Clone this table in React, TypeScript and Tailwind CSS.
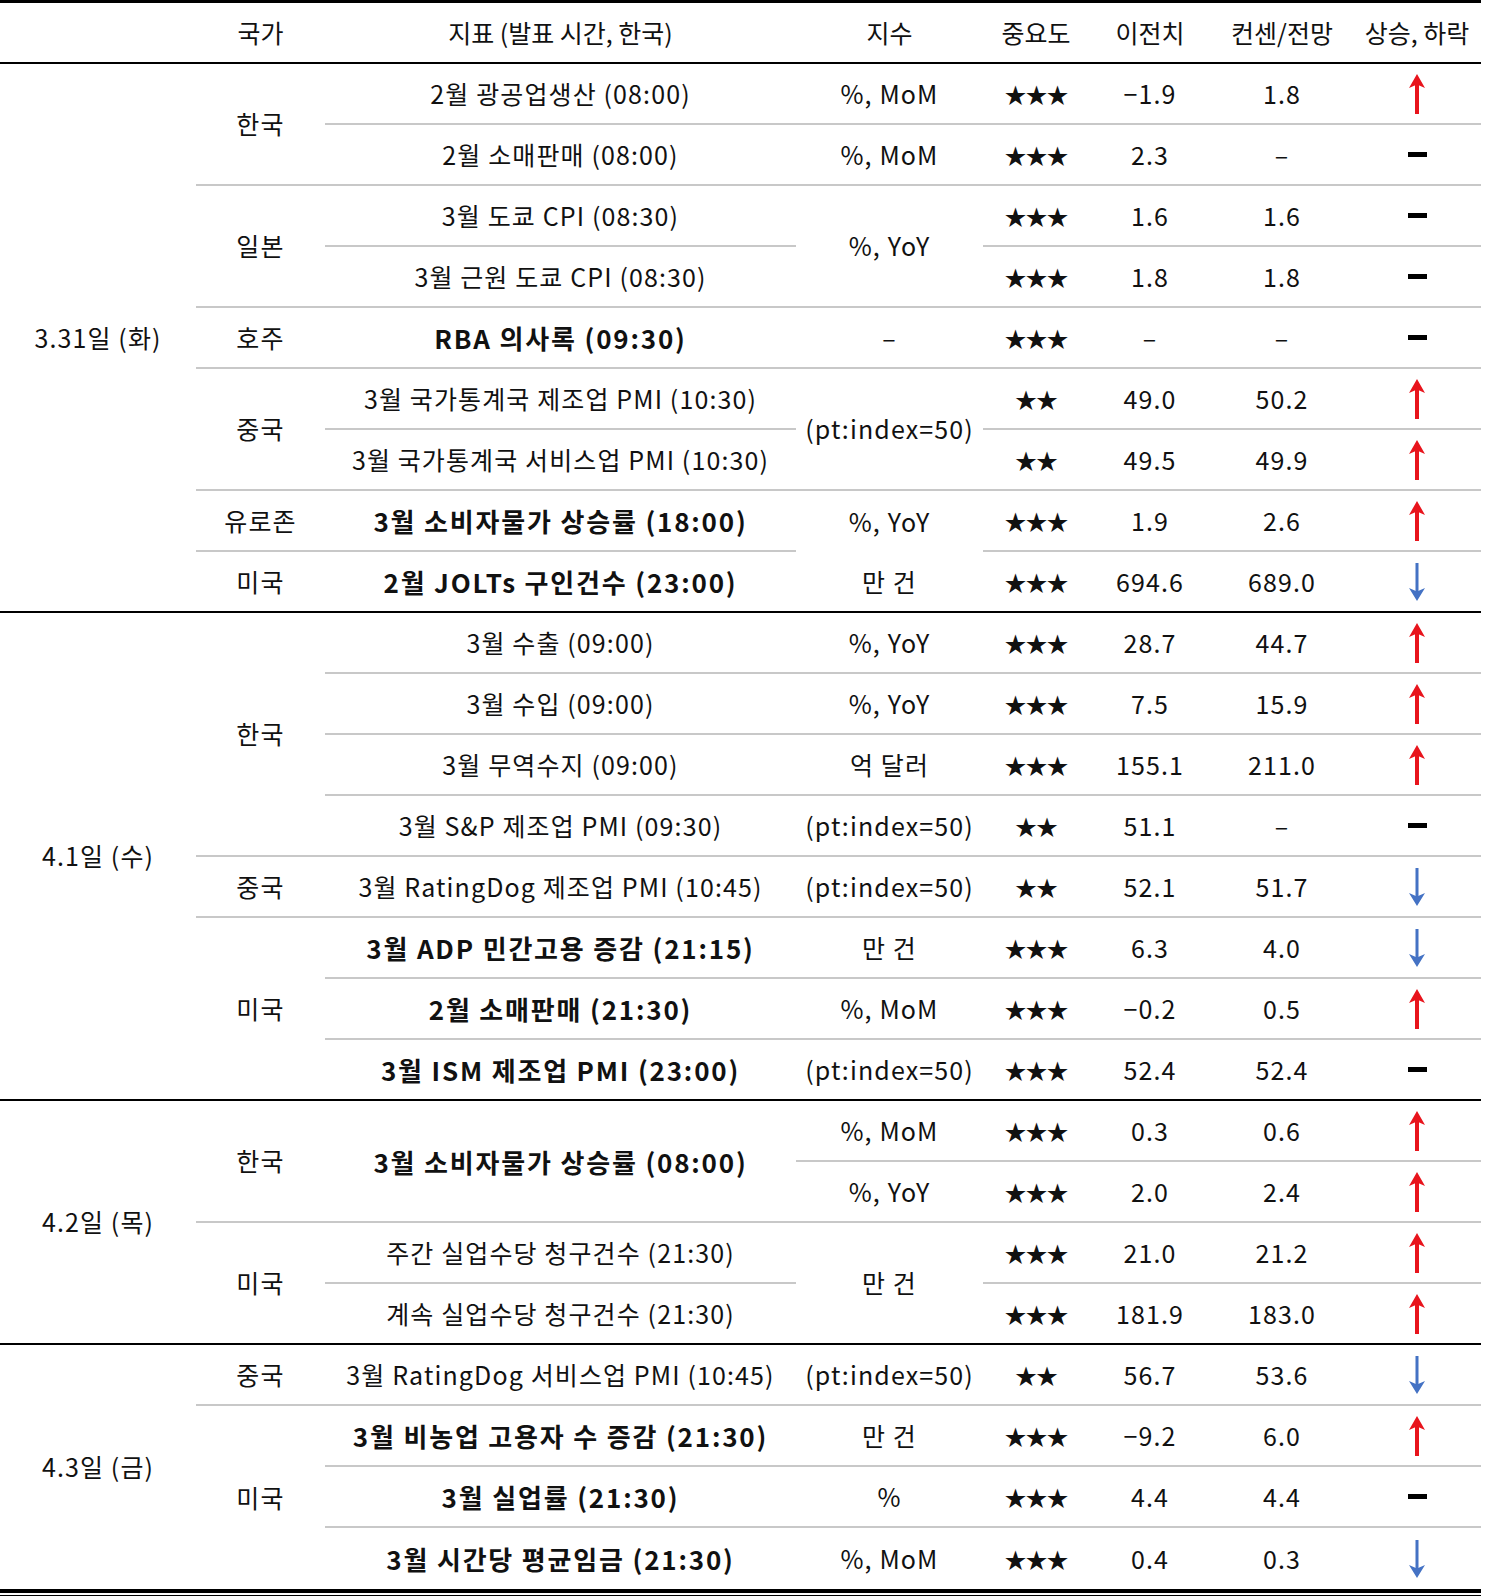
import React from 'react';

type Line = 'k' | 'g' | 'n';
type Mark = 'up' | 'down' | 'dash';

interface Cell {
  t: string;
  kind?: 'date' | 'text' | 'star' | 'mark';
  span?: number;
  bold?: boolean;
  line?: Line;
  mark?: Mark;
}

const SPAN: Record<number, string> = {
  1: '',
  2: 'row-span-2',
  3: 'row-span-3',
  4: 'row-span-4',
  8: 'row-span-8',
  9: 'row-span-9',
};

const LINE: Record<Line, string> = {
  k: 'border-b-2 border-black',
  g: 'border-b-2 border-[#c8c8c8]',
  n: '',
};

const C = (t: string, o: Partial<Cell> = {}): Cell => ({ t, kind: 'text', span: 1, line: 'g', ...o });

// 중요도, 이전치, 컨센, 방향
const tail = (stars: string, prev: string, cons: string, mark: Mark, line: Line = 'g'): Cell[] => [
  { t: stars, kind: 'star', span: 1, line },
  { t: prev, kind: 'text', span: 1, line },
  { t: cons, kind: 'text', span: 1, line },
  { t: '', kind: 'mark', span: 1, line, mark },
];

const cells: Cell[] = [
  // 3.31일 (화)
  C('3.31일 (화)', { kind: 'date', span: 9, line: 'k' }),
  C('한국', { span: 2 }),
  C('2월 광공업생산 (08:00)'),
  C('%, MoM'),
  ...tail('★★★', '−1.9', '1.8', 'up'),
  C('2월 소매판매 (08:00)'),
  C('%, MoM'),
  ...tail('★★★', '2.3', '–', 'dash'),
  C('일본', { span: 2 }),
  C('3월 도쿄 CPI (08:30)'),
  C('%, YoY', { span: 2 }),
  ...tail('★★★', '1.6', '1.6', 'dash'),
  C('3월 근원 도쿄 CPI (08:30)'),
  ...tail('★★★', '1.8', '1.8', 'dash'),
  C('호주'),
  C('RBA 의사록 (09:30)', { bold: true }),
  C('–'),
  ...tail('★★★', '–', '–', 'dash'),
  C('중국', { span: 2 }),
  C('3월 국가통계국 제조업 PMI (10:30)'),
  C('(pt:index=50)', { span: 2 }),
  ...tail('★★', '49.0', '50.2', 'up'),
  C('3월 국가통계국 서비스업 PMI (10:30)'),
  ...tail('★★', '49.5', '49.9', 'up'),
  C('유로존'),
  C('3월 소비자물가 상승률 (18:00)', { bold: true }),
  C('%, YoY', { line: 'n' }),
  ...tail('★★★', '1.9', '2.6', 'up'),
  C('미국', { line: 'k' }),
  C('2월 JOLTs 구인건수 (23:00)', { bold: true, line: 'k' }),
  C('만 건', { line: 'k' }),
  ...tail('★★★', '694.6', '689.0', 'down', 'k'),

  // 4.1일 (수)
  C('4.1일 (수)', { kind: 'date', span: 8, line: 'k' }),
  C('한국', { span: 4 }),
  C('3월 수출 (09:00)'),
  C('%, YoY'),
  ...tail('★★★', '28.7', '44.7', 'up'),
  C('3월 수입 (09:00)'),
  C('%, YoY'),
  ...tail('★★★', '7.5', '15.9', 'up'),
  C('3월 무역수지 (09:00)'),
  C('억 달러'),
  ...tail('★★★', '155.1', '211.0', 'up'),
  C('3월 S&P 제조업 PMI (09:30)'),
  C('(pt:index=50)'),
  ...tail('★★', '51.1', '–', 'dash'),
  C('중국'),
  C('3월 RatingDog 제조업 PMI (10:45)'),
  C('(pt:index=50)'),
  ...tail('★★', '52.1', '51.7', 'down'),
  C('미국', { span: 3, line: 'k' }),
  C('3월 ADP 민간고용 증감 (21:15)', { bold: true }),
  C('만 건'),
  ...tail('★★★', '6.3', '4.0', 'down'),
  C('2월 소매판매 (21:30)', { bold: true }),
  C('%, MoM'),
  ...tail('★★★', '−0.2', '0.5', 'up'),
  C('3월 ISM 제조업 PMI (23:00)', { bold: true, line: 'k' }),
  C('(pt:index=50)', { line: 'k' }),
  ...tail('★★★', '52.4', '52.4', 'dash', 'k'),

  // 4.2일 (목)
  C('4.2일 (목)', { kind: 'date', span: 4, line: 'k' }),
  C('한국', { span: 2 }),
  C('3월 소비자물가 상승률 (08:00)', { bold: true, span: 2 }),
  C('%, MoM'),
  ...tail('★★★', '0.3', '0.6', 'up'),
  C('%, YoY'),
  ...tail('★★★', '2.0', '2.4', 'up'),
  C('미국', { span: 2, line: 'k' }),
  C('주간 실업수당 청구건수 (21:30)'),
  C('만 건', { span: 2, line: 'k' }),
  ...tail('★★★', '21.0', '21.2', 'up'),
  C('계속 실업수당 청구건수 (21:30)', { line: 'k' }),
  ...tail('★★★', '181.9', '183.0', 'up', 'k'),

  // 4.3일 (금)
  C('4.3일 (금)', { kind: 'date', span: 4, line: 'n' }),
  C('중국'),
  C('3월 RatingDog 서비스업 PMI (10:45)'),
  C('(pt:index=50)'),
  ...tail('★★', '56.7', '53.6', 'down'),
  C('미국', { span: 3, line: 'n' }),
  C('3월 비농업 고용자 수 증감 (21:30)', { bold: true }),
  C('만 건'),
  ...tail('★★★', '−9.2', '6.0', 'up'),
  C('3월 실업률 (21:30)', { bold: true }),
  C('%'),
  ...tail('★★★', '4.4', '4.4', 'dash'),
  C('3월 시간당 평균임금 (21:30)', { bold: true, line: 'n' }),
  C('%, MoM', { line: 'n' }),
  ...tail('★★★', '0.4', '0.3', 'down', 'n'),
];

const headers = ['', '국가', '지표 (발표 시간, 한국)', '지수', '중요도', '이전치', '컨센/전망', '상승, 하락'];

const MarkIcon: React.FC<{ m?: Mark }> = ({ m }) => {
  if (m === 'dash') return <div className="w-[19px] h-[5px] bg-black" />;
  if (m === 'up')
    return (
      <svg width="18" height="40" viewBox="0 0 18 40">
        <rect x="7" y="9" width="4" height="31" fill="#e8141c" />
        <path d="M9 0 L17 14 L9 10.5 L1 14 Z" fill="#e8141c" />
      </svg>
    );
  return (
    <svg width="18" height="38" viewBox="0 0 18 38">
      <rect x="7.5" y="0" width="3" height="29" fill="#4472c4" />
      <path d="M9 38 L17 25 L9 28.5 L1 25 Z" fill="#4472c4" />
    </svg>
  );
};

const cellText = (c: Cell) => {
  if (c.kind === 'star') return 'text-[22px] tracking-[-1px]';
  if (c.bold) return 'font-bold text-[26px] tracking-[0.07em]';
  return 'tracking-[0.045em]';
};

export default function App() {
  const cols = 'grid grid-cols-[196px_129px_471px_187px_106px_122px_142px_128px]';
  return (
    <div className="w-[1485px] bg-white text-[#111] font-['Noto_Sans_CJK_KR',sans-serif] text-[25px]">
      <div className="w-[1481px]">
        <div className="h-[3px] bg-black" />
        <div className={`${cols} h-[61px] border-b-2 border-black`}>
          {headers.map((h, i) => (
            <div key={i} className="flex items-center justify-center">
              {h}
            </div>
          ))}
        </div>
        <div className={`${cols} auto-rows-[61px]`}>
          {cells.map((c, i) => (
            <div
              key={i}
              className={`flex items-center justify-center whitespace-nowrap ${SPAN[c.span ?? 1]} ${LINE[c.line ?? 'g']} ${cellText(c)}`}
            >
              {c.kind === 'mark' ? <MarkIcon m={c.mark} /> : c.t}
            </div>
          ))}
        </div>
        <div className="h-[4px] bg-black" />
        <div className="h-[2px]" />
        <div className="h-[2px] bg-black" />
      </div>
    </div>
  );
}
